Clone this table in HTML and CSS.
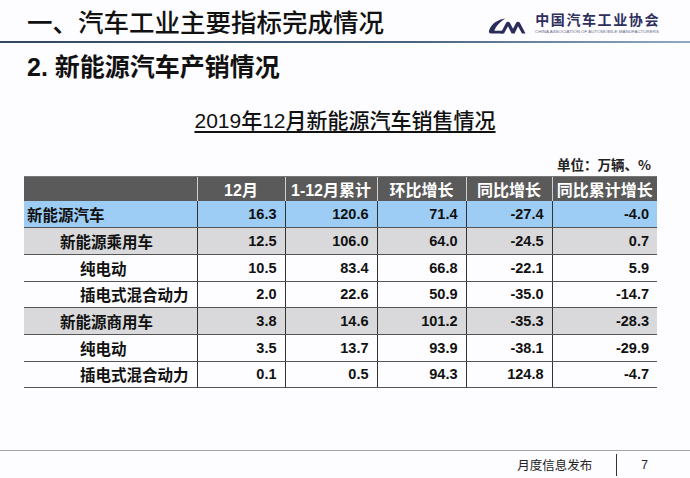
FILE: index.html
```html
<!DOCTYPE html>
<html lang="zh-CN">
<head>
<meta charset="utf-8">
<title>新能源汽车产销情况</title>
<link rel="stylesheet" href="styles.css">
</head>
<body>
<div class="page">
  <header class="top">
    <h1 class="title">一、汽车工业主要指标完成情况</h1>
    <div class="brand">
      <svg class="logo" viewBox="0 0 42 16" width="42" height="16" aria-hidden="true">
        <path d="M17.5 0.5 C10 1.2 3 6 1 12.8 C0.6 14.5 1.4 15.5 3 15.5 L15 15.5 L15.6 12.8 L6.3 12.8 C8.2 8 11.5 4 17.5 0.5 Z" fill="#2a2c5c"/>
        <path d="M12.5 15.5 L18 5 C19 3.4 21 3.4 22 5 L25 10.8 L28 5 C29 3.4 31 3.4 32 5 L37.5 15.5 L34 15.5 L30 8.3 L26.6 15.5 L23.6 15.5 L20 8.3 L16 15.5 Z" fill="#2a2c5c"/>
      </svg>
      <div class="brand-text">
        <div class="brand-cn">中国汽车工业协会</div>
        <svg class="brand-en" viewBox="0 0 124 5" width="124" height="5"><text x="0" y="4" textLength="124" lengthAdjust="spacingAndGlyphs">CHINA ASSOCIATION OF AUTOMOBILE MANUFACTURERS</text></svg>
      </div>
    </div>
  </header>
  <div class="rule"></div>
  <h2 class="subtitle">2. 新能源汽车产销情况</h2>
  <p class="caption">2019年12月新能源汽车销售情况</p>
  <p class="unit">单位：万辆、%</p>
  <table class="data">
    <thead>
      <tr>
        <th class="c-name"></th>
        <th class="c1">12月</th>
        <th class="c2">1-12月累计</th>
        <th class="c3">环比增长</th>
        <th class="c4">同比增长</th>
        <th class="c5">同比累计增长</th>
      </tr>
    </thead>
    <tbody>
      <tr class="row-blue">
        <td class="name lvl0">新能源汽车</td><td>16.3</td><td>120.6</td><td>71.4</td><td>-27.4</td><td>-4.0</td>
      </tr>
      <tr class="row-gray">
        <td class="name lvl1">新能源乘用车</td><td>12.5</td><td>106.0</td><td>64.0</td><td>-24.5</td><td>0.7</td>
      </tr>
      <tr>
        <td class="name lvl2">纯电动</td><td>10.5</td><td>83.4</td><td>66.8</td><td>-22.1</td><td>5.9</td>
      </tr>
      <tr>
        <td class="name lvl2">插电式混合动力</td><td>2.0</td><td>22.6</td><td>50.9</td><td>-35.0</td><td>-14.7</td>
      </tr>
      <tr class="row-gray">
        <td class="name lvl1">新能源商用车</td><td>3.8</td><td>14.6</td><td>101.2</td><td>-35.3</td><td>-28.3</td>
      </tr>
      <tr>
        <td class="name lvl2">纯电动</td><td>3.5</td><td>13.7</td><td>93.9</td><td>-38.1</td><td>-29.9</td>
      </tr>
      <tr>
        <td class="name lvl2">插电式混合动力</td><td>0.1</td><td>0.5</td><td>94.3</td><td>124.8</td><td>-4.7</td>
      </tr>
    </tbody>
  </table>
  <footer class="foot">
    <span class="foot-label">月度信息发布</span>
    <span class="foot-sep"></span>
    <span class="foot-page">7</span>
  </footer>
</div>
</body>
</html>
```
FILE: styles.css
```css
* { box-sizing: border-box; }
html, body { margin: 0; padding: 0; }
body {
  background: #fdfcfe;
  font-family: "Liberation Sans", "Noto Sans CJK SC", sans-serif;
  color: #111;
}
.page {
  width: 690px;
  height: 478px;
  display: flex;
  flex-direction: column;
  overflow: hidden;
}
.top {
  height: 41px;
  display: flex;
  align-items: flex-start;
  justify-content: space-between;
  padding-left: 27px;
}
.title {
  margin: 6px 0 0;
  font-family: "Noto Sans CJK SC", sans-serif;
  font-weight: 500;
  font-size: 25.5px;
  line-height: 30px;
  color: #111;
}
.brand {
  display: flex;
  align-items: flex-start;
  gap: 5px;
  margin-right: 30px;
  padding-top: 11px;
}
.logo { display: block; margin-top: 7px; }
.brand-text { display: flex; flex-direction: column; }
.brand-cn {
  font-family: "Noto Sans CJK SC", sans-serif;
  font-weight: 700;
  font-size: 14px;
  line-height: 16px;
  letter-spacing: 1.6px;
  color: #2d2f5e;
}
.brand-en { display: block; margin-top: 2px; }
.brand-en text {
  font-family: "Liberation Sans", sans-serif;
  font-size: 4px;
  fill: #6a6c8a;
}
.rule {
  height: 2px;
  background: linear-gradient(to right, #33475e 0%, #4a6480 60%, #8eaac4 100%);
}
.subtitle {
  margin: 9px 0 0 27px;
  font-family: "Liberation Sans", "Noto Sans CJK SC", sans-serif;
  font-weight: 700;
  font-size: 25px;
  line-height: 30px;
  color: #111;
}
.caption {
  margin: 26px 0 0;
  text-align: center;
  font-family: "Liberation Sans", "Noto Sans CJK SC", sans-serif;
  font-size: 21px;
  line-height: 26px;
  font-weight: 500;
  text-decoration: underline;
  text-decoration-thickness: 1.5px;
  text-underline-offset: 3px;
  color: #111;
}
.unit {
  margin: 21px 39px 0 0;
  text-align: right;
  font-family: "Noto Sans CJK SC", sans-serif;
  font-weight: 700;
  font-size: 13.5px;
  line-height: 18px;
  color: #222;
}
.data {
  margin: 3px 0 0 24px;
  width: 633px;
  border-collapse: collapse;
  table-layout: fixed;
}
.data th {
  height: 24px;
  padding: 0;
  background: #5a5a5a;
  color: #fff;
  font-weight: 700;
  font-size: 16px;
  font-family: "Liberation Sans", "Noto Sans CJK SC", sans-serif;
  text-align: center;
  border-left: 1px solid #cfcfcf;
  border-top: 1px solid #777;
}
.data th.c-name { border-left: none; width: 173px; }
.data th.c1 { width: 88px; }
.data th.c2 { width: 92px; }
.data th.c3 { width: 89px; }
.data th.c4 { width: 86px; }
.data th.c5 { width: 105px; }
.data td {
  height: 26.7px;
  padding: 0 8px 0 0;
  text-align: right;
  font-family: "Liberation Sans", sans-serif;
  font-weight: 700;
  font-size: 14.5px;
  color: #111;
  border-left: 1px solid #333;
  border-bottom: 1px solid #555;
}
.data td.name {
  border-left: none;
  text-align: left;
  font-family: "Noto Sans CJK SC", sans-serif;
  font-size: 15.5px;
  padding-right: 0;
}
.lvl0 { padding-left: 3px !important; }
.lvl1 { padding-left: 36px !important; }
.lvl2 { padding-left: 56px !important; }
.row-blue td { background: #9dcdf4; }
.row-gray td { background: #d9d9db; }
.foot {
  margin-top: auto;
  height: 28px;
  border-top: 1px solid #a3a3a3;
  display: flex;
  align-items: center;
  justify-content: flex-end;
  padding-right: 42px;
  font-family: "Noto Sans CJK SC", sans-serif;
  font-size: 12.5px;
  color: #222;
}
.foot-label { line-height: 16px; }
.foot-sep {
  width: 1px;
  height: 22px;
  background: #333;
  margin: 0 24px 0 24px;
}
.foot-page { font-family: "Liberation Sans", sans-serif; font-size: 12px; }
```
